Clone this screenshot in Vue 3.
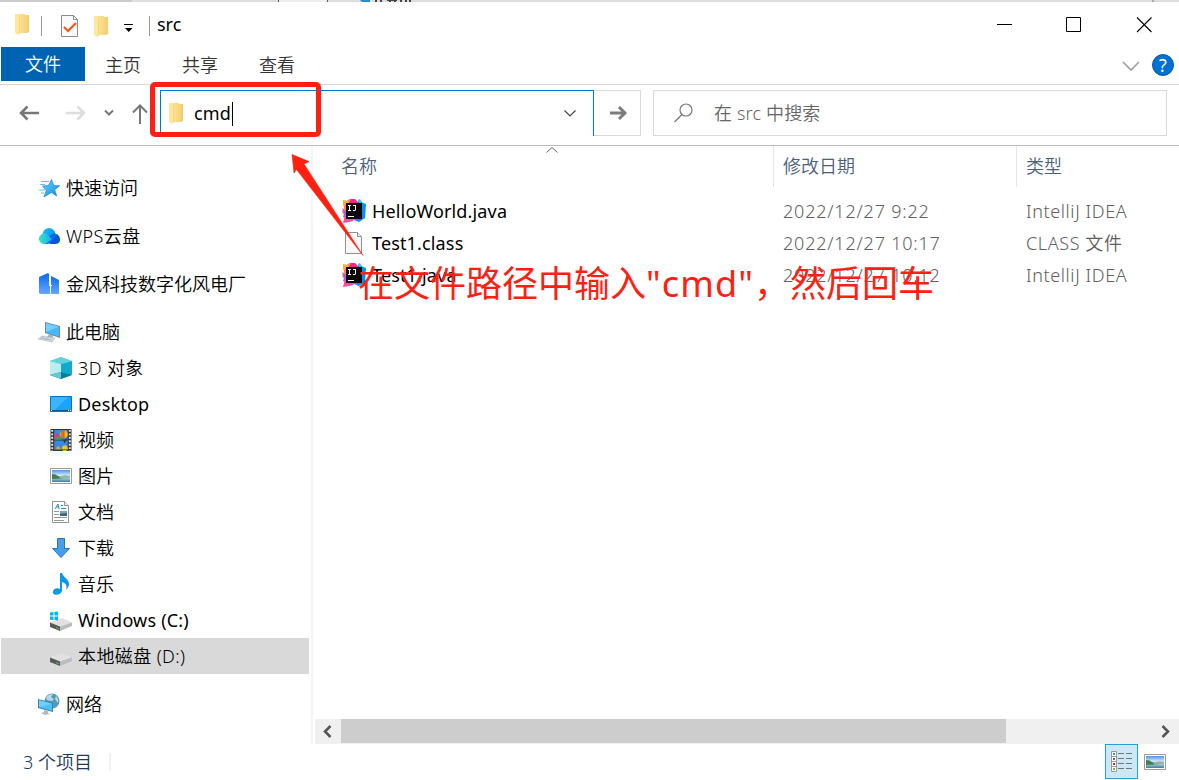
<template>
  <div class="explorer">
    <svg class="sprite" aria-hidden="true">
      <defs>
        <linearGradient id="g-folder" x1="0" x2="1">
          <stop offset="0" stop-color="#ffe7a0" />
          <stop offset="1" stop-color="#f3cd6c" />
        </linearGradient>
        <linearGradient id="g-star" x1="0" y1="0" x2="1" y2="1">
          <stop offset="0" stop-color="#65d2ff" />
          <stop offset="1" stop-color="#108ce0" />
        </linearGradient>
        <linearGradient id="g-cloud-left" x1="0" x2="1">
          <stop offset="0" stop-color="#38e6bd" />
          <stop offset="1" stop-color="#16a9fb" />
        </linearGradient>
        <linearGradient id="g-cloud-top" x1="0" y1="0" x2="1" y2="1">
          <stop offset="0" stop-color="#19c4fb" />
          <stop offset="1" stop-color="#087cf4" />
        </linearGradient>
        <linearGradient id="g-building" x1="0" y1="0" x2="0" y2="1">
          <stop offset="0" stop-color="#0869ed" />
          <stop offset="1" stop-color="#65a9ff" />
        </linearGradient>
        <linearGradient id="g-sky" x1="0" y1="0" x2="0" y2="1">
          <stop offset="0" stop-color="#4f93ed" />
          <stop offset="0.5" stop-color="#def4fd" />
          <stop offset="0.75" stop-color="#8dbfc5" />
          <stop offset="1" stop-color="#3e78a0" />
        </linearGradient>
      </defs>

      <symbol id="i-folder" viewBox="0 0 14 21">
        <path d="M2 0h8v1h4v17l-2 1H2z" fill="url(#g-folder)" />
        <path d="M0 0h2l2.500 2v18L3 21l-3-2z" fill="#ffe69b" />
        <path d="M4.500 2v18" stroke="#efcf7b" stroke-width=".7" />
      </symbol>
      <symbol id="i-star" viewBox="0 0 22 22">
        <path d="M3 4.500h8M2 7.500h5M1 13h6M3 16h3" stroke="#65bcf0" stroke-width="1" />
        <path d="M13.500 2.500l2.200 6 6 .2-5 4 2 6.300-5.200-3.600L6 20l2.400-6.800-4-4.200 6-.4z" fill="url(#g-star)" stroke="#1685ce" stroke-width=".7" />
      </symbol>
      <symbol id="i-cloud" viewBox="0 0 22 22">
        <circle cx="11" cy="9.500" r="6.500" fill="url(#g-cloud-top)" />
        <path d="M12 19L8 14l7-5c4-1 7 2 7 5.500S19.500 19 17 19z" fill="#0857d2" />
        <path d="M6 19l9-9c2-1.500 4-1 5 0-5 1-6 9-11 9z" fill="#0a6fee" />
        <path d="M5.500 19a5.300 5.300 0 1 1 4.500-9l4 4-5 4-2 1z" fill="url(#g-cloud-left)" />
      </symbol>
      <symbol id="i-building" viewBox="0 0 22 22">
        <path d="M1 4l9-4 1 1v12h1v8H2L1 20z" fill="url(#g-building)" />
        <path d="M13 3l8 4v14h-8v-8h1v-1h-1z" fill="url(#g-building)" />
      </symbol>
      <symbol id="i-pc" viewBox="0 0 22 22">
        <path d="M7 1l15 4v12L7 12z" fill="#728797" />
        <path d="M8 2.200l13 3.500v9.700L8 11.500z" fill="#46b9fc" />
        <path d="M8 2.200l13 3.500L8 11z" fill="#75cefd" />
        <path d="M11 13l4 1.500v2H9z" fill="#a8b1b7" />
        <path d="M4 15l13 2-3 4-14-3z" fill="#d4dce0" stroke="#a2aeb5" stroke-width=".5" />
        <path d="M3 17l11 2M6 15.500l-4 2.500M10 16l-3 3.500" stroke="#8e9aa0" stroke-width=".5" />
      </symbol>
      <symbol id="i-cube" viewBox="0 0 22 22">
        <path d="M0 4l11-4 11 4v14l-11 4-11-4z" fill="#71d1df" />
        <path d="M0 4l11 3v10L0 18z" fill="#b9edee" />
        <path d="M11 7l11-3v14l-11-3z" fill="#10a9d0" />
        <path d="M0 4l11-4 11 4-11 3z" fill="#65d0dd" />
        <path d="M0 18l11-3 11 3-11 4z" fill="#087d96" />
        <path d="M0 18l11-3v7z" fill="#62c9d6" />
      </symbol>
      <symbol id="i-desktop" viewBox="0 0 22 22">
        <path d="M.5 3.500h21v15H.5z" fill="#18a4fa" stroke="#0674bb" />
        <path d="M1 4h17L5 17H1z" fill="#3bb5ff" />
        <path d="M1 17.500h20" stroke="#07588f" />
        <path d="M1 17.500h1M18 17.500h1M20 17.500h1" stroke="#fff" />
      </symbol>
      <symbol id="i-video" viewBox="0 0 22 23">
        <path d="M0 0h22v23H0z" fill="#333" />
        <path d="M1.800 1v22M20.200 1v22" stroke="#e9e9e9" stroke-width="2" stroke-dasharray="2 1.600" />
        <path d="M4 1h14v10H4zM4 12h14v10H4z" fill="#398ae4" />
        <path d="M4 7q3-5 5 0v4H4z" fill="#d73d78" />
        <path d="M4 10l4-2 5 2v1H4z" fill="#46a241" />
        <circle cx="14" cy="5.500" r="4" fill="#f0b91b" />
        <path d="M14 1.500v8M12 2v7" stroke="#b33120" />
        <path d="M11 9l3 3 4-3-3 6z" fill="#333" />
        <circle cx="8" cy="20" r="2" fill="#ef9a2a" />
        <circle cx="15" cy="20" r="3" fill="#eac038" />
        <path d="M4 22h14v-1H4z" fill="#377aba" />
      </symbol>
      <symbol id="i-picture" viewBox="0 0 22 16">
        <path d="M.5.500h21v15H.5z" fill="#fff" stroke="#9b9b9b" />
        <path d="M2 2h18v12H2z" fill="url(#g-sky)" />
        <path d="M2 6q4 0 6 2 4 1 7 2-7 1-13 1z" fill="#437d53" />
        <path d="M9 9q5-3 11-1v2H10z" fill="#93b4a4" />
      </symbol>
      <symbol id="i-document" viewBox="0 0 22 22">
        <path d="M2.500.500h12l4 4v17h-16z" fill="#fff" stroke="#8e9696" />
        <path d="M14.500.500v4h4" fill="#edf1f2" stroke="#8e9696" />
        <path d="M5 8l3-5 1 5M6 6h3M11 4.500h2M11 7.500h5" fill="none" stroke="#2490d2" />
        <path d="M4 10.500h5M4 13.500h5M4 16.500h13M4 19.500h10" stroke="#939a9e" />
        <path d="M10 10h7v5h-7z" fill="#6fa5cd" />
        <path d="M10 13l7-1v3h-7z" fill="#48605c" />
      </symbol>
      <symbol id="i-download" viewBox="0 0 22 22">
        <path d="M7.500 1.500h7v10h5L11 20.500 2.500 11.500h5z" fill="#459feb" stroke="#2478b9" />
      </symbol>
      <symbol id="i-music" viewBox="0 0 22 22">
        <path d="M10 0h2c1 4 7 6 7 11 0 2-1 4-3 6 2-5-1-7-4-8v9c-1 4-8 5-9 2-1-4 4-6 7-4z" fill="#069bea" />
      </symbol>
      <symbol id="i-drive" viewBox="0 0 22 22">
        <path d="M0 12.500L12 8l10 4.500-12 4z" fill="#e1e1e1" />
        <path d="M10 16.500l12-4v3.500l-12 5z" fill="#bdbdc1" />
        <path d="M0 12.500l10 4v4.500L0 17z" fill="#555957" />
        <path d="M6 17l3 1.200v1L6 18z" fill="#3fd23c" />
      </symbol>
      <symbol id="i-windrive" viewBox="0 0 22 22">
        <use href="#i-drive" y="1" width="22" height="22" />
        <path d="M0 3.500L3.500 3v3.500H0zM4.500 3L8 2.500v4H4.500zM0 7.500h3.500V11L0 10.700zM4.500 7.500H8v4L4.500 11z" fill="#00b8f1" />
      </symbol>
      <symbol id="i-network" viewBox="0 0 22 22">
        <circle cx="14" cy="8" r="7.500" fill="#5897b7" />
        <path d="M8 5q2-4 7-4l-2 3 3 2-2 2-5-1zM18 3q3 3 2 7l-3-4z" fill="#b3dbe5" />
        <path d="M0 6l15 4v9L0 15z" fill="#3183b7" />
        <path d="M1 7.200l13 3.500v7L1 14.200z" fill="#4ec0fa" />
        <path d="M1 7.200l13 3.500L1 14z" fill="#73cffb" />
        <path d="M6 17l4 1v2l2 1-5 1-4-2 3-1z" fill="#b1bcc1" />
      </symbol>
      <symbol id="i-file" viewBox="0 0 24 24">
        <path d="M3.500 1.500h12l4 4v17h-16z" fill="#f8f8f8" stroke="#919191" />
        <path d="M15.500 1.500v4h4" fill="#eaeaea" stroke="#919191" />
      </symbol>
      <symbol id="i-idea" viewBox="0 0 24 24">
        <path d="M1 1l6 2-2 17-5-7 2-4z" fill="#ff8a35" />
        <path d="M0 9l4 3 1 8-4-2 1-3z" fill="#9f61df" />
        <path d="M8 0h5l3 3v4H3V3z" fill="#fb2684" />
        <path d="M1 1l4 1 4-2-4 6-4 1z" fill="#ffae36" />
        <path d="M17 0l4 4 3 1-1 14-6 4-5-2 3-16z" fill="#078dfb" />
        <path d="M16 3l2-3 2 5z" fill="#3cc9df" />
        <path d="M3 16l12 4-7 3-7 1z" fill="#f34ea3" />
        <path d="M4 4h16v16H4z" fill="#0b0708" />
        <path d="M6 6.500h3M7.500 6v6M6 11.500h3M11 6.500h3M13.500 6v5q0 .5-.5.500h-2" fill="none" stroke="#fff" />
        <path d="M6 17.500h6" stroke="#fff" />
      </symbol>
    </svg>

    <svg class="backdrop" width="1179" height="2">
      <path d="M0 0h132v2H0z" fill="#cbcbcb" />
      <path d="M278 0h50v2h-50z" fill="#eee" />
      <path d="M278 0h1v2h-1zM327 0h1v2h-1z" fill="#555" />
      <path d="M360 0h10v2h-8z" fill="#258fcf" />
      <path d="M375 0h2v2h-2zM380 0h2v2h-2zM387 0h10v1h-10zM389 1h2v1h-2zM394 1h2v1h-2zM400 0h2v2h-2zM405 0h2v2h-2zM409 0h2v2h-2z" fill="#444" />
      <path d="M1152 0h2v2h-2z" fill="#aaa" />
    </svg>

    <header class="titlebar">
      <svg class="folder"><use href="#i-folder" /></svg>
      <i class="sep sep-first"></i>
      <svg class="properties" width="18" height="23" viewBox="0 0 18 23">
        <path d="M.5.500h12l4 4v17H.5z" fill="#f8f9fb" stroke="#8b8b8b" />
        <path d="M12.500.500v4h4" fill="none" stroke="#8b8b8b" />
        <path d="M3 12l4 4 8-8" fill="none" stroke="#f2581b" stroke-width="2.200" />
      </svg>
      <svg class="folder folder-quick"><use href="#i-folder" /></svg>
      <svg class="customize" width="10" height="9" viewBox="0 0 10 9">
        <path d="M0 .5h9" stroke="#000" />
        <path d="M1 4h7.500L4.750 8z" />
      </svg>
      <i class="sep sep-title"></i>
      <span class="title">src</span>
      <div class="window-buttons">
        <svg width="16" height="16"><path d="M1 7.500h15" stroke="#000" /></svg>
        <svg width="16" height="16"><path d="M.5.500h14v14H.5z" fill="none" stroke="#000" /></svg>
        <svg width="16" height="16"><path d="M1 .5l14.500 14.500M15.500 .5l-14.500 14.500" stroke="#000" stroke-width="1.100" /></svg>
      </div>
    </header>

    <nav class="ribbon">
      <span class="tab tab-file">文件</span>
      <span v-for="tab in tabs" :key="tab" class="tab">{{ tab }}</span>
      <svg class="ribbon-toggle" width="18" height="10"><path d="M1 1l8 8 8-8" fill="none" stroke="#a0a0a0" stroke-width="1.700" /></svg>
      <span class="help">?</span>
    </nav>

    <div class="toolbar">
      <div class="history">
        <svg width="20" height="18"><path d="M20 9H2M8.500 2.500L2 9l6.500 6.500" fill="none" stroke="#777" stroke-width="2.500" /></svg>
        <svg class="forward" width="20" height="18"><path d="M0 9h18M11.500 2.500L18 9l-6.500 6.500" fill="none" stroke="#dcdcdc" stroke-width="2.500" /></svg>
        <svg class="recent" width="10" height="8"><path d="M1 1.500l4 4 4-4" fill="none" stroke="#777" stroke-width="2" /></svg>
        <svg class="up" width="16" height="20"><path d="M8 20V2M1 8.500L8 1.500l7 7" fill="none" stroke="#777" stroke-width="2" /></svg>
      </div>
      <div class="address">
        <svg class="folder"><use href="#i-folder" /></svg>
        <span class="path">cmd</span><i class="caret"></i>
        <svg class="address-toggle" width="12" height="7"><path d="M.5.500L6 6 11.500.500" fill="none" stroke="#444" stroke-width="1.200" /></svg>
      </div>
      <div class="go">
        <svg width="18" height="16"><path d="M0 8h16M9 2l6 6-6 6" fill="none" stroke="#7c7c7c" stroke-width="2.900" /></svg>
      </div>
      <div class="search">
        <svg width="19" height="20"><circle cx="12" cy="7" r="6" fill="none" stroke="#777" stroke-width="1.200" /><path d="M8 11.500L.5 19" stroke="#777" stroke-width="1.300" /></svg>
        <span>在 src 中搜索</span>
      </div>
    </div>

    <div class="body">
      <aside class="tree">
        <div
          v-for="item in places"
          :key="item.label"
          class="place"
          :class="{ child: item.child, selected: item.selected }"
        >
          <svg class="place-icon"><use :href="`#i-${item.icon}`" /></svg>
          <span :class="item.script">{{ item.label }}</span>
        </div>
      </aside>

      <main class="files">
        <div class="columns">
          <span class="col-name">名称</span>
          <span class="col-date">修改日期</span>
          <span class="col-type">类型</span>
          <svg class="sort" width="12" height="6"><path d="M.5 5.500L6 .5l5.500 5" fill="none" stroke="#666" /></svg>
        </div>
        <div v-for="file in files" :key="file.name" class="file">
          <span class="file-name">
            <svg class="file-icon"><use :href="`#i-${file.icon}`" /></svg>
            <span>{{ file.name }}</span>
          </span>
          <span class="file-date">{{ file.date }}</span>
          <span class="file-type">{{ file.type }}</span>
        </div>

        <div class="scrollbar">
          <svg class="scroll-arrow" width="26" height="24"><path d="M15.500 7L10 12.500l5.500 5.500" fill="none" stroke="#555" stroke-width="2.500" /></svg>
          <div class="thumb"></div>
          <svg class="scroll-arrow" width="26" height="24"><path d="M9.500 7l5.500 5.500L9.500 18" fill="none" stroke="#555" stroke-width="2.500" /></svg>
        </div>
      </main>
    </div>

    <footer class="status">
      <span class="count">3 个项目</span>
      <i class="status-sep"></i>
      <div class="view view-details">
        <svg width="22" height="22" viewBox="0 0 22 22">
          <path d="M.5.500h5v20h-5zM0 5.500h6M0 10.500h6M0 15.500h6" fill="#fff" stroke="#999" />
          <path d="M2 2h2v2H2z" fill="#398dbb" />
          <path d="M2 7h2v2H2z" fill="#776551" />
          <path d="M2 12h2v2H2z" fill="#d12418" />
          <path d="M2 17h2v2H2z" fill="#80ad56" />
          <path d="M7 2.500h6M15 2.500h6M7 7.500h6M15 7.500h6M7 12.500h6M15 12.500h6M7 17.500h6M15 17.500h6" stroke="#6f7779" />
        </svg>
      </div>
      <svg class="view-large"><use href="#i-picture" /></svg>
    </footer>

    <div class="mark-box"></div>
    <svg class="mark-arrow" width="74" height="104"><path d="M2 2.500l17 7-5 2.500L73 103.500 6.500 17.500 4 21z" fill="#ff2012" stroke="#ff2012" stroke-width=".6" /></svg>
    <div class="mark-text">在文件路径中输入<span class="mark-cmd">"cmd"</span>，然后回车</div>
  </div>
</template>

<script setup>
const tabs = ['主页', '共享', '查看']

const places = [
  { label: '快速访问', icon: 'star' },
  { label: 'WPS云盘', icon: 'cloud', script: 'mixed' },
  { label: '金风科技数字化风电厂', icon: 'building' },
  { label: '此电脑', icon: 'pc' },
  { label: '3D 对象', icon: 'cube', child: true, script: 'mixed' },
  { label: 'Desktop', icon: 'desktop', child: true, script: 'latin' },
  { label: '视频', icon: 'video', child: true },
  { label: '图片', icon: 'picture', child: true },
  { label: '文档', icon: 'document', child: true },
  { label: '下载', icon: 'download', child: true },
  { label: '音乐', icon: 'music', child: true },
  { label: 'Windows (C:)', icon: 'windrive', child: true, script: 'latin' },
  { label: '本地磁盘 (D:)', icon: 'drive', child: true, selected: true, script: 'mixed' },
  { label: '网络', icon: 'network' }
]

const files = [
  { name: 'HelloWorld.java', icon: 'idea', date: '2022/12/27 9:22', type: 'IntelliJ IDEA' },
  { name: 'Test1.class', icon: 'file', date: '2022/12/27 10:17', type: 'CLASS 文件' },
  { name: 'Test1.java', icon: 'idea', date: '2022/12/27 10:12', type: 'IntelliJ IDEA' }
]
</script>

<style>
body{
    margin: 0;
    overflow: hidden;
}
</style>

<style scoped>
.explorer{
    position: relative;
    box-sizing: border-box;
    width: 1179px;
    height: 780px;
    display: flex;
    flex-direction: column;
    overflow: hidden;
    background: #fff;
    color: #000;
    font-family: "Noto Sans", "Noto Sans CJK SC", sans-serif;
    font-size: 18px;
    font-weight: 350;
    line-height: 26px;
    white-space: nowrap;
}
.explorer *{
    box-sizing: border-box;
}
svg{
    display: block;
    flex: none;
}
.sprite{
    position: absolute;
    width: 0;
    height: 0;
}
.backdrop{
    background: #dedede;
}
.folder{
    width: 14px;
    height: 21px;
}
.titlebar{
    height: 45px;
    flex: none;
    display: flex;
    align-items: center;
    padding: 0 27px 0 15px;
}
.sep{
    width: 1px;
    height: 20px;
    background: #999;
}
.sep-first{
    margin: 2px 19px 0 12px;
}
.properties{
    margin-top: 3px;
}
.folder-quick{
    margin: 4px 16px 0 15px;
}
.customize{
    margin-top: 7px;
}
.sep-title{
    margin: 2px 7px 0 15px;
}
.title{
    margin-top: -2px;
    font-weight: 400;
}
.window-buttons{
    display: flex;
    gap: 54px;
    margin-left: auto;
}
.ribbon{
    height: 38px;
    flex: none;
    display: flex;
    padding: 0 5px 0 1px;
    border-bottom: 1px solid #d8d8d8;
    color: #333;
}
.tab{
    width: 77px;
    padding: 5px 1px 0 0;
    text-align: center;
}
.tab-file{
    width: 84px;
    height: 34px;
    padding: 4px 0 0;
    background: #0063b1;
    color: #fff;
}
.ribbon-toggle{
    margin: 14px 12px 0 auto;
}
.help{
    width: 22px;
    height: 22px;
    margin-top: 7px;
    border: 1px solid #07569c;
    border-radius: 50%;
    background: #0070d4;
    color: #fff;
    font-size: 18px;
    font-weight: 400;
    line-height: 20px;
    text-align: center;
}
.toolbar{
    height: 61px;
    flex: none;
    display: flex;
    padding: 5px 12px 0 0;
    border-bottom: 1px solid #bdbdbd;
}
.history{
    width: 160px;
    height: 46px;
    display: flex;
    align-items: center;
    padding-left: 19px;
}
.forward{
    margin-left: 27px;
}
.recent{
    margin-left: 18px;
}
.up{
    margin: 2px 0 0 18px;
}
.address{
    width: 434px;
    height: 46px;
    display: flex;
    align-items: center;
    padding: 0 17px 0 8px;
    border: 1px solid #0078d7;
    border-bottom: 0;
}
.path{
    width: 38px;
    margin: -2px 0 0 11px;
    font-weight: 400;
    letter-spacing: 0.2px;
}
.caret{
    width: 1px;
    height: 24px;
    background: #000;
}
.address-toggle{
    margin-left: auto;
}
.go{
    width: 47px;
    height: 46px;
    display: flex;
    align-items: center;
    justify-content: center;
    padding-left: 3px;
    border: 1px solid #d9d9d9;
    border-left: 0;
}
.search{
    width: 514px;
    height: 46px;
    display: flex;
    align-items: center;
    gap: 21px;
    margin-left: 12px;
    padding-left: 20px;
    border: 1px solid #d9d9d9;
    color: #666;
    letter-spacing: 0.15px;
}
.body{
    height: 598px;
    flex: none;
    display: flex;
}
.tree{
    width: 313px;
    padding: 12px 2px 0 1px;
    border-right: 2px solid #f5f5f5;
}
.place{
    width: 308px;
    height: 36px;
    display: flex;
    align-items: center;
    gap: 6px;
    margin-top: 12px;
    padding-left: 37px;
}
.place.child{
    margin-top: 0;
    padding-left: 49px;
}
.place-icon{
    width: 22px;
    height: 22px;
}
.selected{
    background: #d9d9d9;
}
.mixed{
    letter-spacing: 0.4px;
}
.latin{
    font-weight: 400;
    letter-spacing: 0.2px;
}
.files{
    flex: 1;
    display: flex;
    flex-direction: column;
}
.columns{
    position: relative;
    height: 41px;
    display: flex;
    margin-bottom: 8px;
    color: #4c607a;
    line-height: 41px;
}
.col-name{
    width: 460px;
    padding-left: 28px;
}
.col-date{
    width: 243px;
    padding-left: 9px;
    border-left: 1px solid #e5e5e5;
}
.col-type{
    padding-left: 9px;
    border-left: 1px solid #e5e5e5;
}
.sort{
    position: absolute;
    left: 233px;
    top: 1px;
}
.file{
    height: 32px;
    display: flex;
    align-items: center;
    color: #606060;
}
.file-name{
    width: 470px;
    display: flex;
    align-items: center;
    gap: 6px;
    padding-left: 29px;
    color: #000;
    font-weight: 400;
    letter-spacing: 0.15px;
}
.file-icon{
    width: 24px;
    height: 24px;
}
.file-date{
    width: 243px;
    letter-spacing: 0.8px;
}
.file-type{
    letter-spacing: 0.6px;
}
.scrollbar{
    height: 25px;
    display: flex;
    justify-content: space-between;
    margin: auto 0 0 2px;
    background: #f0f0f0;
}
.thumb{
    width: 665px;
    height: 24px;
    margin-right: auto;
    background: #cdcdcd;
}
.status{
    height: 36px;
    flex: none;
    display: flex;
    align-items: center;
    padding: 0 13px 0 23px;
    color: #1e395b;
}
.status-sep{
    width: 2px;
    height: 18px;
    margin-left: 17px;
    background: #f0f0f0;
}
.view{
    width: 33px;
    height: 35px;
    display: flex;
    align-items: center;
    justify-content: center;
    margin: 0 6px 1px auto;
    border: 1px solid #26a0da;
    background: #cce8f6;
}
.view-large{
    width: 22px;
    height: 16px;
}
.mark-box{
    position: absolute;
    left: 150px;
    top: 82px;
    width: 171px;
    height: 55px;
    border: 5px solid #ff2012;
    border-radius: 5px;
}
.mark-arrow{
    position: absolute;
    left: 290px;
    top: 152px;
}
.mark-text{
    position: absolute;
    left: 358px;
    top: 258px;
    color: #ff2012;
    font-size: 36px;
    font-weight: 400;
    line-height: 52px;
}
.mark-cmd{
    letter-spacing: 1.1px;
}
</style>
